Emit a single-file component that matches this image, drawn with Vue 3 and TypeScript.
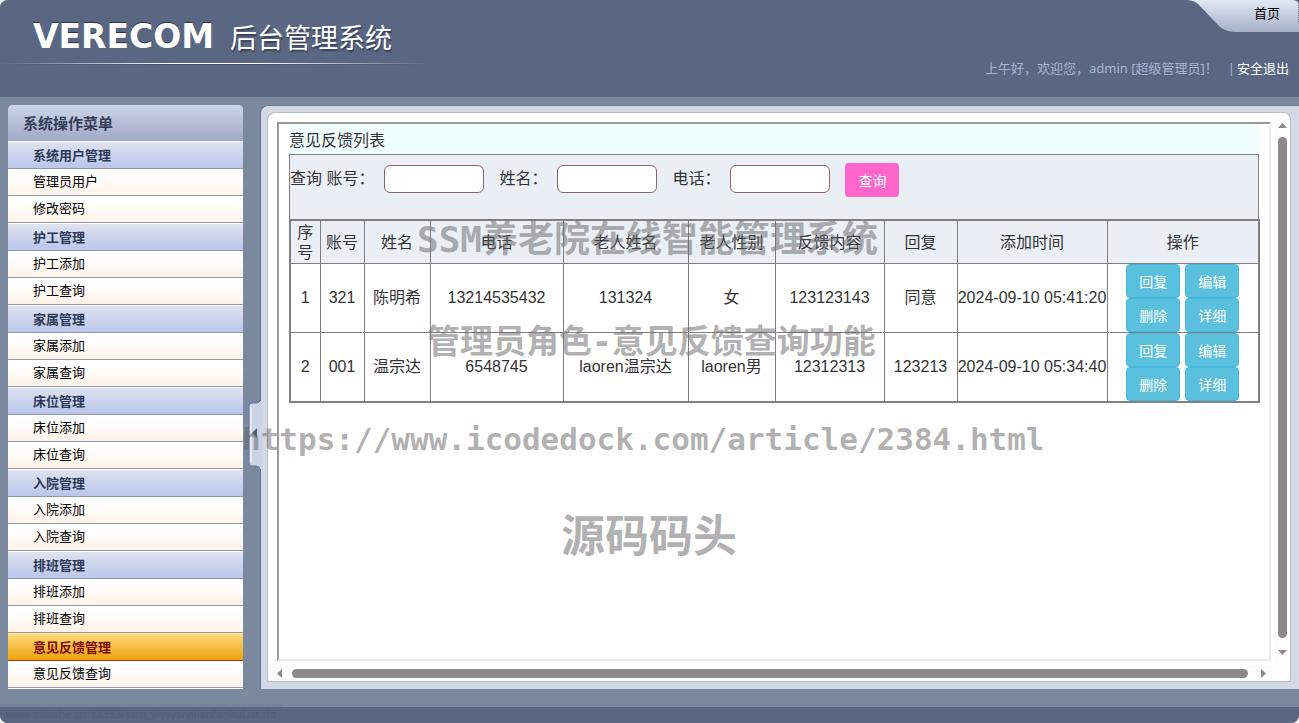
<script setup lang="ts">
import { ref } from 'vue'

interface MenuGroup {
  title: string
  links: string[]
}

interface Feedback {
  id: number
  account: string
  name: string
  phone: string
  elder: string
  gender: string
  content: string
  reply: string
  time: string
}

const menu: MenuGroup[] = [
  { title: '系统用户管理', links: ['管理员用户', '修改密码'] },
  { title: '护工管理', links: ['护工添加', '护工查询'] },
  { title: '家属管理', links: ['家属添加', '家属查询'] },
  { title: '床位管理', links: ['床位添加', '床位查询'] },
  { title: '入院管理', links: ['入院添加', '入院查询'] },
  { title: '排班管理', links: ['排班添加', '排班查询'] },
  { title: '意见反馈管理', links: ['意见反馈查询'] },
]
const activeGroup = ref('意见反馈管理')

const fields = [
  { id: 'account', prefix: '查询 ', label: '账号：' },
  { id: 'name', prefix: '', label: '姓名：' },
  { id: 'phone', prefix: '', label: '电话：' },
]
const query = ref<Record<string, string>>({ account: '', name: '', phone: '' })

const columns = ['序号', '账号', '姓名', '电话', '老人姓名', '老人性别', '反馈内容', '回复', '添加时间', '操作']
const actions = ['回复', '编辑', '删除', '详细']

const rows: Feedback[] = [
  { id: 1, account: '321', name: '陈明希', phone: '13214535432', elder: '131324', gender: '女', content: '123123143', reply: '同意', time: '2024-09-10 05:41:20' },
  { id: 2, account: '001', name: '温宗达', phone: '6548745', elder: 'laoren温宗达', gender: 'laoren男', content: '12312313', reply: '123213', time: '2024-09-10 05:34:40' },
]
</script>

<template>
  <div class="page">
    <header class="header">
      <div class="brand">
        <h1 class="logo"><span class="logo-en">VERECOM</span><span class="logo-cn">后台管理系统</span></h1>
      </div>
      <div class="header-right">
        <nav class="tab">
          <svg class="tab-shape" viewBox="0 0 112 32" preserveAspectRatio="none" aria-hidden="true">
            <defs>
              <linearGradient id="tabFill" x1="0" y1="0" x2="0" y2="1">
                <stop offset="0" stop-color="#e1e8f5" />
                <stop offset="1" stop-color="#a5b1c7" />
              </linearGradient>
            </defs>
            <path d="M0 0 Q8 0 13 6 L31 25 Q37 32 48 32 H112 V6 Q112 0 105 0 Z" fill="url(#tabFill)" />
            <path d="M111.500 5 V22" stroke="#596783" stroke-dasharray="1 1" />
          </svg>
          <a href="#" class="home">首页</a>
        </nav>
        <p class="welcome">
          <span>上午好，欢迎您，admin [超级管理员]！</span>
          <span class="bar">|</span>
          <a href="#" class="logout">安全退出</a>
        </p>
      </div>
    </header>

    <div class="main">
      <aside class="sidebar">
        <h2 class="menu-title">系统操作菜单</h2>
        <section v-for="g in menu" :key="g.title">
          <button type="button" class="group" :class="{ active: g.title === activeGroup }" @click="activeGroup = g.title">{{ g.title }}</button>
          <a v-for="l in g.links" :key="l" href="#" class="link">{{ l }}</a>
        </section>
      </aside>

      <div class="splitter">
        <button type="button" class="handle" aria-label="收起菜单">
          <svg width="14" height="68" viewBox="0 0 14 68">
            <path d="M14 0 H12 Q11 2 8 2 H4 Q1 2 1 5 V62 Q1 65 4 65 H8 Q11 65 12 68 H14 Z" fill="#cbd3e4" />
            <path d="M12 0 Q11 2 8 2 H4 Q1 2 1 5 V62 Q1 65 4 65 H8 Q11 65 12 68" fill="none" stroke="#66759a" />
            <path d="M3 6 V61" stroke="#e2e7f2" stroke-width="2" />
            <path d="M9 27 V37 L4 32 Z" fill="#4d5c80" />
          </svg>
        </button>
      </div>

      <div class="panel">
        <div class="window">
          <main class="frame">
            <h3 class="list-title">意见反馈列表</h3>
            <form class="search" @submit.prevent>
              <div v-for="f in fields" :key="f.id" class="field">
                <label :for="f.id">{{ f.prefix }}{{ f.label }}</label>
                <input :id="f.id" v-model="query[f.id]" type="text" />
              </div>
              <button type="submit" class="query">查询</button>
            </form>
            <table class="list">
              <colgroup>
                <col v-for="(c, i) in columns" :key="c" :class="`c${i}`" />
              </colgroup>
              <thead>
                <tr>
                  <th v-for="c in columns" :key="c" scope="col">{{ c }}</th>
                </tr>
              </thead>
              <tbody>
                <tr v-for="r in rows" :key="r.id">
                  <td>{{ r.id }}</td>
                  <td>{{ r.account }}</td>
                  <td>{{ r.name }}</td>
                  <td>{{ r.phone }}</td>
                  <td>{{ r.elder }}</td>
                  <td>{{ r.gender }}</td>
                  <td>{{ r.content }}</td>
                  <td>{{ r.reply }}</td>
                  <td class="time">{{ r.time }}</td>
                  <td>
                    <div class="ops">
                      <button v-for="a in actions" :key="a" type="button" class="op">{{ a }}</button>
                    </div>
                  </td>
                </tr>
              </tbody>
            </table>
          </main>
          <div class="vbar" aria-hidden="true">
            <svg width="9" height="5" viewBox="0 0 9 5"><path d="M0 5 L4.500 0 L9 5 Z" fill="#8a8a8a" /></svg>
            <i class="thumb"></i>
            <svg width="9" height="5" viewBox="0 0 9 5"><path d="M0 0 L4.500 5 L9 0 Z" fill="#8a8a8a" /></svg>
          </div>
          <div class="hbar" aria-hidden="true">
            <svg width="5" height="9" viewBox="0 0 5 9"><path d="M5 0 L0 4.500 L5 9 Z" fill="#8a8a8a" /></svg>
            <i class="thumb"></i>
            <svg width="5" height="9" viewBox="0 0 5 9"><path d="M0 0 L5 4.500 L0 9 Z" fill="#8a8a8a" /></svg>
          </div>
        </div>
      </div>
    </div>

    <footer class="footer"></footer>
    <div class="status">www.csbishe.cn:33333/ssm_ylysys/yijianfankuList.do</div>

    <div class="watermarks" aria-hidden="true">
      <span class="wm wm-title">SSM养老院在线智能管理系统</span>
      <span class="wm wm-sub">管理员角色-意见反馈查询功能</span>
      <span class="wm wm-url">https://www.icodedock.com/article/2384.html</span>
      <span class="wm wm-name">源码码头</span>
    </div>
  </div>
</template>

<style>
body {
  margin: 0;
  background: #eef1f6;
}
</style>

<style scoped>
* {
  box-sizing: border-box;
}
.page {
  position: relative;
  display: flex;
  flex-direction: column;
  min-height: 100vh;
  overflow: hidden;
  border-radius: 8px 0 8px 8px;
  background: #7b899f;
  font: 13px/20px "Noto Sans", "Noto Sans CJK SC", sans-serif;
  color: #333;
}
h1, h2, h3, p {
  margin: 0;
}
a {
  text-decoration: none;
}
button {
  padding: 0;
  border: 0;
  font-family: inherit;
  cursor: pointer;
}

.header {
  display: flex;
  justify-content: space-between;
  height: 97px;
  background: #596783;
}
.brand {
  width: 430px;
}
.logo {
  display: flex;
  align-items: center;
  height: 66px;
  padding: 8px 0 0 33px;
  background:
    linear-gradient(90deg, transparent, #fff 40%, #fff 60%, transparent) 0 63px / 100% 1px no-repeat,
    linear-gradient(90deg, transparent, #46506a 40%, #46506a 60%, transparent) 0 64px / 100% 1px no-repeat;
  color: #fff;
  line-height: 40px;
  text-shadow: 1px 2px 1px #39445c;
}
.logo-en {
  width: 197px;
  font-family: "DejaVu Sans", sans-serif;
  font-size: 33px;
  font-weight: 700;
  text-shadow: 0 -1px 0 #2c3446;
}
.logo-cn {
  font-family: "Noto Sans CJK SC", sans-serif;
  font-size: 27px;
  font-weight: 400;
}
.header-right {
  display: flex;
  flex-direction: column;
  align-items: flex-end;
}
.tab {
  position: relative;
  width: 112px;
  height: 32px;
  padding: 3px 19px 0 0;
  text-align: right;
}
.tab-shape {
  position: absolute;
  inset: 0;
  width: 100%;
  height: 100%;
}
.home {
  position: relative;
  color: #000;
}
.welcome {
  display: flex;
  padding: 26px 10px 0 0;
  color: #a8b4d3;
}
.bar {
  padding: 0 2px 0 10px;
}
.logout {
  color: #fff;
}

.main {
  display: flex;
  flex: 1;
  padding: 8px 0 18px 8px;
}
.sidebar {
  width: 235px;
  overflow: hidden;
  border-radius: 5px 5px 0 0;
  background: #fff;
}
.menu-title {
  height: 36px;
  padding-left: 15px;
  background: linear-gradient(#cdd5e7, #a0a9c6);
  color: #333e58;
  font-size: 15px;
  line-height: 37px;
}
.group {
  display: block;
  width: 100%;
  height: 28px;
  padding-left: 25px;
  border-top: 1px solid #fff;
  border-bottom: 1px solid #8d98b2;
  background: linear-gradient(#dfe3f0, #b9c6ea);
  color: #2d3a57;
  font-size: 13px;
  font-weight: 700;
  line-height: 26px;
  text-align: left;
}
.group.active {
  border-top-color: #ffe49a;
  border-bottom-color: #a93c14;
  background: linear-gradient(#ffd97a, #eaa20a);
  color: #7f0a05;
}
.link {
  display: block;
  height: 27px;
  padding-left: 25px;
  border-bottom: 1px solid #919bb1;
  background: linear-gradient(#fff 20%, #fdf2e8);
  color: #000;
  line-height: 24px;
}

.splitter {
  position: relative;
  z-index: 1;
  width: 17px;
  padding: 296px 0 0 5px;
}
.handle {
  display: block;
  width: 14px;
  height: 68px;
  background: none;
}
.handle svg {
  display: block;
}
.panel {
  display: flex;
  flex: 1;
  min-width: 0;
  padding: 7px 9px 8px 7px;
  border: solid #68769a;
  border-width: 1px 0 0 1px;
  border-radius: 8px 0 0 0;
  background: #d2d8e4;
}
.window {
  display: grid;
  flex: 1;
  grid-template-columns: minmax(0, 1fr) 15px;
  grid-template-rows: 1fr 16px;
  min-width: 0;
  overflow: hidden;
  border-radius: 7px 7px 0 0;
  background: #fff;
  box-shadow: 0 0 0 1px #b3bdcd;
}
.frame {
  margin: 9px 4px 4px 9px;
  padding: 0 10px;
  border: 2px solid;
  border-color: #999 #ececec #ececec #999;
  font: 16px/20px "Liberation Sans", "Noto Sans CJK SC", sans-serif;
}
.list-title {
  height: 30px;
  background: #f0fdff;
  font-size: 16px;
  font-weight: 400;
  line-height: 33px;
}
.search {
  display: flex;
  align-items: flex-start;
  gap: 15px;
  height: 65px;
  padding-top: 8px;
  border: 1px solid #808080;
  border-bottom: 0;
  background: #eaeff6;
}
.field {
  display: flex;
  align-items: center;
  gap: 10px;
  height: 32px;
}
.field input {
  width: 100px;
  height: 28px;
  padding: 0 8px;
  border: 1px solid #8b6468;
  border-radius: 6px;
  background: #fff;
  font: inherit;
}
.query {
  width: 54px;
  height: 34px;
  border-radius: 4px;
  background: #ff66cc;
  color: #fff;
  font-size: 14px;
}
.list {
  width: 100%;
  border: 2px solid #808080;
  border-collapse: collapse;
  table-layout: fixed;
}
.list th,
.list td {
  padding: 0;
  border: 1px solid #808080;
  font-weight: 400;
  text-align: center;
}
.list th {
  height: 43px;
  padding-top: 2px;
  background: #eaeff6;
}
.list td {
  height: 69px;
}
.time {
  white-space: nowrap;
}
.c0 { width: 30px; }
.c1 { width: 44px; }
.c2 { width: 66px; }
.c3 { width: 133px; }
.c4 { width: 125px; }
.c5 { width: 87px; }
.c6 { width: 109px; }
.c7 { width: 73px; }
.c8 { width: 150px; }
.c9 { width: 152px; }
.ops {
  display: grid;
  grid-template-columns: 54px 54px;
  justify-content: center;
  column-gap: 5px;
}
.op {
  height: 34px;
  border: 1px solid #46b8da;
  border-radius: 4px;
  background: #5bc0de;
  color: #fff;
  font-size: 14px;
}

.vbar,
.hbar {
  display: flex;
  align-items: center;
  background: #fcfcfc;
}
.vbar {
  flex-direction: column;
  gap: 9px;
  padding: 10px 0;
}
.hbar {
  grid-column: 1 / 3;
  gap: 10px;
  padding: 0 24px 0 9px;
}
.thumb {
  flex: 1;
  border-radius: 5px;
  background: #8a8a8a;
}
.vbar .thumb {
  width: 9px;
  margin-bottom: 3px;
}
.hbar .thumb {
  height: 9px;
  margin-right: 3px;
}
.footer {
  height: 16px;
  background: #596783;
}
.status {
  position: absolute;
  bottom: 0;
  left: 0;
  padding: 0 6px 0 5px;
  border-radius: 0 4px 0 0;
  background: rgba(87, 101, 131, 0.2);
  color: #515f7d;
  font-size: 11px;
  line-height: 19px;
}

.watermarks {
  position: absolute;
  inset: 0;
  z-index: 2;
  pointer-events: none;
}
.wm {
  position: absolute;
  color: rgba(100, 100, 100, 0.5);
  font-family: "DejaVu Sans Mono", "Noto Sans CJK SC", monospace;
  font-weight: 700;
  white-space: nowrap;
}
.wm-title {
  top: 220px;
  left: 417px;
  font-size: 36px;
  line-height: 40px;
}
.wm-sub {
  top: 322px;
  left: 427px;
  font-size: 33px;
  line-height: 40px;
}
.wm-url {
  top: 419px;
  left: 242px;
  font-size: 31px;
  line-height: 40px;
}
.wm-name {
  top: 511px;
  left: 561px;
  font-size: 44px;
  line-height: 52px;
}
</style>
